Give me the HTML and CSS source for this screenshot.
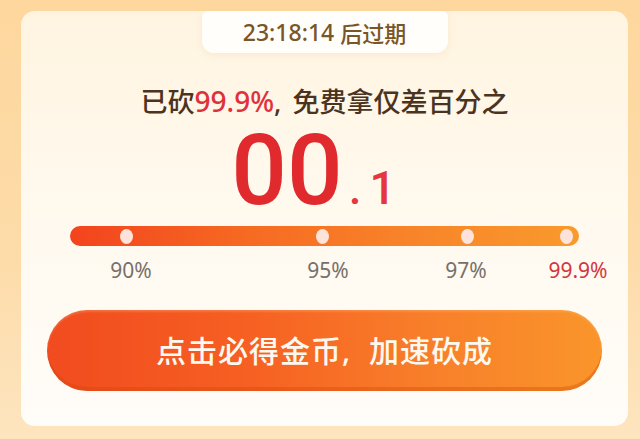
FILE: index.html
```html
<!DOCTYPE html>
<html lang="zh-CN">
<head>
<meta charset="utf-8">
<title>砍价</title>
<link rel="stylesheet" href="styles.css">
</head>
<body>
<div class="page">
  <div class="card">
    <div class="timer"><span class="time">23:18:14</span> 后过期</div>
    <div class="headline">已砍<span class="hl-red">99.9%</span><span class="comma">, </span>免费拿仅差百分之</div>
    <div class="bignum"><span class="big">00</span><span class="small"><span class="pt">.</span>1</span></div>
    <div class="progress">
      <div class="bar">
        <span class="dot" style="left:56px"></span>
        <span class="dot" style="left:252px"></span>
        <span class="dot" style="left:397px"></span>
        <span class="dot" style="left:496px"></span>
      </div>
      <div class="labels">
        <span class="label" style="left:61px">90%</span>
        <span class="label" style="left:258px">95%</span>
        <span class="label" style="left:396px">97%</span>
        <span class="label label-red" style="left:508px">99.9%</span>
      </div>
    </div>
    <button class="cta">点击必得金币<span class="comma">, </span>加速砍成</button>
  </div>
</div>
</body>
</html>
```
FILE: styles.css
```css
html, body {
  margin: 0;
  padding: 0;
}
body {
  width: 640px;
  height: 439px;
  overflow: hidden;
  background: linear-gradient(180deg, #fdd79d 0%, #fddcaa 60%, #fde5bf 100%);
  font-family: "Noto Sans CJK SC", "Noto Sans", sans-serif;
}
.page {
  padding: 11px 12px 13px 21px;
}
.card {
  width: 607px;
  height: 415px;
  box-sizing: border-box;
  border-radius: 14px;
  background: linear-gradient(180deg, #fff4e0 0%, #fff9ee 45%, #fffdf9 100%);
  display: flex;
  flex-direction: column;
  align-items: center;
  padding-bottom: 35px;
}
.timer {
  width: 246px;
  height: 42px;
  box-sizing: border-box;
  background: #fffefb;
  border-radius: 6px 6px 12px 12px;
  box-shadow: 0 2px 6px rgba(240, 200, 150, 0.25);
  display: flex;
  align-items: center;
  justify-content: center;
  color: #7a5527;
  font-size: 22px;
  font-weight: 500;
  line-height: 1;
  gap: 6px;
}
.timer .time {
  font-family: "Noto Sans", Roboto, sans-serif;
  font-size: 23px;
  font-weight: 500;
}
.headline {
  margin-top: 36px;
  height: 24px;
  line-height: 24px;
  font-size: 27px;
  font-weight: 500;
  color: #4a3320;
  white-space: nowrap;
}
.hl-red {
  color: #e0313b;
  font-family: "Noto Sans", Roboto, sans-serif;
  font-weight: 500;
  font-size: 28px;
}
.comma {
  font-family: "Noto Sans", sans-serif;
  white-space: pre;
  margin-right: 4px;
}
.bignum {
  margin-top: 9px;
  height: 98px;
  line-height: 98px;
  font-family: Roboto, "Noto Sans", sans-serif;
  color: #e02a2e;
  white-space: nowrap;
  padding-right: 22px;
}
.big {
  font-size: 98px;
  font-weight: 500;
}
.small {
  font-size: 46px;
  font-weight: 500;
  color: #e4383e;
  margin-left: 6px;
}
.pt {
  margin-right: 8px;
}
.progress {
  margin-top: 6px;
  width: 509px;
}
.bar {
  position: relative;
  height: 20px;
  border-radius: 10px;
  background: linear-gradient(90deg, #f3431e 0%, #f66a22 35%, #f8862a 70%, #f99a2c 100%);
}
.dot {
  position: absolute;
  top: 3px;
  width: 13px;
  height: 15px;
  margin-left: -6.5px;
  border-radius: 50%;
  background: #fde3d9;
}
.labels {
  position: relative;
  margin-top: 12px;
  height: 24px;
  line-height: 24px;
  font-family: "Noto Sans", Roboto, sans-serif;
  font-size: 21px;
  color: #77706b;
}
.label {
  position: absolute;
  top: 0;
  transform: translateX(-50%);
  white-space: nowrap;
}
.label-red {
  color: #d3363f;
}
.cta {
  margin-top: 28px;
  width: 555px;
  height: 81px;
  border: none;
  border-radius: 41px;
  background: linear-gradient(90deg, #f14b1f 0%, #f65f22 35%, #f8802a 70%, #fa952a 100%);
  box-shadow: inset 0 -4px 0 rgba(205, 70, 10, 0.35), inset 0 2px 2px rgba(255, 200, 150, 0.25);
  color: #fff8ee;
  font-family: "Noto Sans CJK SC", "Noto Sans", sans-serif;
  font-size: 30px;
  font-weight: 500;
  letter-spacing: 1px;
  padding: 0 0 4px 0;
  cursor: pointer;
  white-space: nowrap;
}
.cta .comma {
  margin-right: 9px;
}
```
